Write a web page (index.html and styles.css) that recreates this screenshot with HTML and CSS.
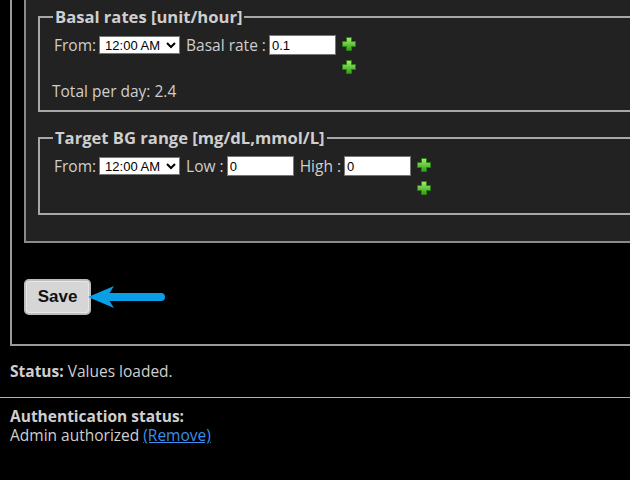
FILE: index.html
```html
<!DOCTYPE html>
<html>
<head>
<meta charset="utf-8">
<link rel="stylesheet" href="styles.css">
</head>
<body>
<div class="outer">
  <div class="panel">
    <fieldset class="group g1">
      <legend>Basal rates [unit/hour]</legend>
      <div class="row">
        <div class="fields">
          <label>From:</label>
          <select class="sel"><option>12:00 AM</option></select>
          <label class="lbl">Basal rate :</label>
          <input class="num" type="text" value="0.1">
        </div>
        <div class="adds">
          <svg class="plus" viewBox="0 0 14 14"><defs><linearGradient id="pg1" x1="0" y1="0" x2="0" y2="1"><stop offset="0" stop-color="#a6f070"/><stop offset="1" stop-color="#2e9e14"/></linearGradient></defs><path d="M4.5 0.5h5v4h4v5h-4v4h-5v-4h-4v-5h4z" fill="url(#pg1)" stroke="#2a8012" stroke-width="1"/></svg>
          <svg class="plus" viewBox="0 0 14 14"><path d="M4.5 0.5h5v4h4v5h-4v4h-5v-4h-4v-5h4z" fill="url(#pg1)" stroke="#2a8012" stroke-width="1"/></svg>
        </div>
      </div>
      <div class="total">Total per day: 2.4</div>
    </fieldset>
    <fieldset class="group g2">
      <legend>Target BG range [mg/dL,mmol/L]</legend>
      <div class="row">
        <div class="fields">
          <label>From:</label>
          <select class="sel"><option>12:00 AM</option></select>
          <label class="lbl">Low :</label>
          <input class="num" type="text" value="0">
          <label class="lbl">High :</label>
          <input class="num" type="text" value="0">
        </div>
        <div class="adds">
          <svg class="plus" viewBox="0 0 14 14"><path d="M4.5 0.5h5v4h4v5h-4v4h-5v-4h-4v-5h4z" fill="url(#pg1)" stroke="#2a8012" stroke-width="1"/></svg>
          <svg class="plus" viewBox="0 0 14 14"><path d="M4.5 0.5h5v4h4v5h-4v4h-5v-4h-4v-5h4z" fill="url(#pg1)" stroke="#2a8012" stroke-width="1"/></svg>
        </div>
      </div>
    </fieldset>
  </div>
  <div class="actions">
    <button class="save">Save</button>
    <svg class="arrow" width="78" height="26" viewBox="0 0 78 26"><path d="M0 13 L26 2 L21 10 L72 10 A3 3 0 0 1 72 16 L21 16 L26 24 Z" fill="#0a9ee6"/><line x1="22" y1="13" x2="73" y2="13" stroke="#0a9ee6" stroke-width="8" stroke-linecap="round"/></svg>
  </div>
</div>
<div class="status"><b>Status:</b> Values loaded.</div>
<hr class="sep">
<div class="auth">
  <div class="auth-title">Authentication status:</div>
  <div>Admin authorized <a href="#">(Remove)</a></div>
</div>
</body>
</html>
```
FILE: styles.css
```css
html, body {
  margin: 0;
  padding: 0;
  background: #000;
  overflow: hidden;
}
body {
  color: #cfcfcf;
  font-family: "Open Sans", "Noto Sans", sans-serif;
  font-size: 15.5px;
  line-height: 18px;
}
.outer {
  margin: -30px -40px 0 10px;
  border: 2px solid #9a9a9a;
  border-top: none;
  padding: 0 0 29px 12px;
}
.panel {
  background: #222;
  border: 2px solid #8a8a8a;
  border-top: none;
  padding: 38px 0 26px 12px;
}
.group {
  margin: 0;
  border: 2px solid #a8a8a8;
  padding: 9px 0 10px 14px;
  min-width: 0;
}
.group legend {
  padding: 0 2px;
  margin-left: -1px;
  font-weight: bold;
  font-size: 16.6px;
  line-height: 18px;
  color: #cfcfcf;
}
.g2 {
  margin-top: 17px;
  padding-bottom: 18px;
}
.row {
  display: flex;
  align-items: flex-start;
}
.fields {
  display: flex;
  align-items: center;
  height: 20px;
}
.sel {
  margin-left: 3px;
  width: 81px;
  height: 18px;
  font-family: "Liberation Sans", Arial, sans-serif;
  font-size: 13px;
  background: #fff;
  color: #000;
  border: 1px solid #767676;
  border-radius: 0;
  padding: 0 0 0 1px;
}
.lbl {
  margin-left: 6px;
}
.num {
  margin-left: 3px;
  width: 67px;
  height: 20px;
  box-sizing: border-box;
  border: 1px solid #767676;
  padding: 0 2px;
  font-family: "Liberation Sans", Arial, sans-serif;
  font-size: 13px;
  color: #000;
  background: #fff;
}
.adds {
  display: flex;
  flex-direction: column;
  gap: 9px;
  margin-left: 6px;
  padding-top: 2px;
}
.plus {
  width: 14px;
  height: 14px;
  display: block;
}
.total {
  margin-top: 8px;
  margin-left: -2px;
}
.actions {
  display: flex;
  align-items: center;
  margin-top: 36px;
}
.save {
  width: 67px;
  height: 36px;
  background: #d6d6d6;
  border: 2px solid #bdbdbd;
  border-radius: 5px;
  box-shadow: inset 0 0 0 1px #e8e8e8;
  font-family: "Liberation Sans", Arial, sans-serif;
  font-weight: bold;
  font-size: 17px;
  color: #111;
  padding: 0;
}
.arrow {
  margin-left: -3px;
  display: block;
}
.status {
  margin: 16px 0 0 10px;
}
.status b {
  font-weight: bold;
}
.sep {
  margin: 17px 0 0 0;
  border: none;
  border-top: 1px solid #b0b0b0;
  height: 0;
}
.auth {
  margin: 9px 0 0 10px;
  line-height: 19px;
}
.auth-title {
  font-weight: bold;
}
.auth a {
  color: #3c8ee8;
}
```
